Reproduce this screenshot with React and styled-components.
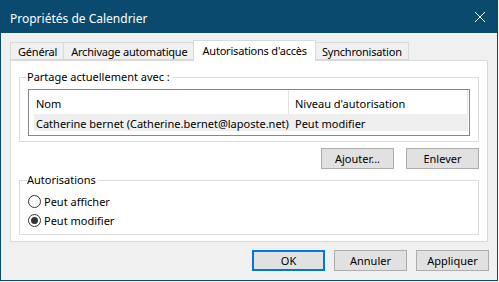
import React, { useState } from "react";
import styled, { createGlobalStyle } from "styled-components";

const Global = createGlobalStyle`
  html, body { margin: 0; padding: 0; background: #ffffff; }
  body { font-family: "Noto Sans", "Open Sans", sans-serif; font-size: 11px; color: #000; }
  * { box-sizing: border-box; }
`;

const Window = styled.div`
  width: 498px;
  height: 281px;
  border: 1px solid #0a4a6e;
  border-top: none;
  background: #f0f0f0;
  display: flex;
  flex-direction: column;
`;

const TitleBar = styled.div`
  height: 33px;
  background: #0a4a6e;
  color: #fff;
  display: flex;
  align-items: center;
  justify-content: space-between;
  padding: 3px 10px 0 10px;
  font-size: 12px;
  margin: 0 -1px;
`;

const CloseBtn = styled.div`
  width: 14px;
  height: 14px;
  margin-right: 1px;
  margin-top: -3px;
  display: flex;
`;

const Body = styled.div`
  flex: 1;
  display: flex;
  flex-direction: column;
  padding: 7px 9px 0 9px;
`;

const TabRow = styled.div`
  display: flex;
  align-items: flex-end;
  height: 20px;
  position: relative;
  z-index: 1;
`;

const Tab = styled.div`
  height: ${(p) => (p.$active ? "21px" : "18px")};
  padding: ${(p) => (p.$active ? "0 8px 2px 8px" : "1px 6px 0 7px")};
  margin: 0 ${(p) => (p.$active ? "-1px" : "0")} ${(p) => (p.$active ? "-1px" : "0")};
  border: 1px solid #d9d9d9;
  border-bottom: ${(p) => (p.$active ? "none" : "1px solid #d9d9d9")};
  border-left: ${(p) => (p.$first || p.$active ? "1px solid #d9d9d9" : "none")};
  background: ${(p) => (p.$active ? "#ffffff" : "#f0f0f0")};
  display: flex;
  align-items: center;
  white-space: nowrap;
  letter-spacing: -0.2px;
  position: relative;
  z-index: ${(p) => (p.$active ? 2 : 1)};
`;

const Panel = styled.div`
  height: 182px;
  background: #fff;
  border: 1px solid #d9d9d9;
  padding: 8px 8px 0 8px;
  display: flex;
  flex-direction: column;
`;

const Group = styled.fieldset`
  margin: 0;
  border: 1px solid #dcdcdc;
  padding: ${(p) => p.$pad};
  min-width: 0;
`;

const Legend = styled.legend`
  padding: 0 2px 0 0;
  margin-left: -1px;
  line-height: 16px;
`;

const ListBox = styled.div`
  border: 1px solid #828790;
  height: 47px;
  padding: 0 1px 0 5px;
`;

const ListRow = styled.div`
  display: grid;
  grid-template-columns: 255px 179px;
  height: ${(p) => p.$h}px;
  align-items: center;
  background: ${(p) => (p.$selected ? "#efefef" : "transparent")};
`;

const HeaderCell = styled.div`
  height: 100%;
  display: flex;
  align-items: center;
  padding-left: ${(p) => (p.$sub ? "6px" : "2px")};
  border-right: 1px solid #e5e5e5;
  padding-top: 3px;
`;

const Cell = styled.div`
  padding-left: ${(p) => (p.$sub ? "6px" : "2px")};
  padding-top: 1px;
  white-space: nowrap;
  overflow: hidden;
`;

const ButtonRow = styled.div`
  display: flex;
  justify-content: flex-end;
  gap: 12px;
  margin: ${(p) => p.$margin};
`;

const Button = styled.button`
  width: 73px;
  height: 21px;
  background: #e1e1e1;
  border: ${(p) => (p.$default ? "2px solid #0078d7" : "1px solid #adadad")};
  font-family: inherit;
  font-size: 11px;
  color: #000;
  padding: 0;
  display: flex;
  align-items: center;
  justify-content: center;
`;

const RadioLabel = styled.label`
  display: flex;
  align-items: center;
  gap: 3px;
  height: 19px;
`;

const RadioCircle = styled.span`
  width: 13px;
  height: 13px;
  border-radius: 50%;
  border: 1px solid #333;
  background: #fff;
  display: flex;
  align-items: center;
  justify-content: center;
  &::after {
    content: "";
    width: 7px;
    height: 7px;
    border-radius: 50%;
    background: ${(p) => (p.$checked ? "#333" : "transparent")};
  }
`;

const Footer = styled.div`
  display: flex;
  justify-content: flex-end;
  gap: 9px;
  padding: 8px 0 0 0;
  margin-right: -1px;
`;

function Radio({ checked, children, onSelect }) {
  return (
    <RadioLabel onClick={onSelect}>
      <RadioCircle $checked={checked} />
      {children}
    </RadioLabel>
  );
}

export default function App() {
  const [perm, setPerm] = useState("modifier");
  const tabs = ["Général", "Archivage automatique", "Autorisations d'accès", "Synchronisation"];
  return (
    <>
      <Global />
      <Window>
        <TitleBar>
          <span>Propriétés de Calendrier</span>
          <CloseBtn>
            <svg width="14" height="14" viewBox="0 0 14 14">
              <path d="M2 2 L12 12 M12 2 L2 12" stroke="#fff" strokeWidth="1" fill="none" />
            </svg>
          </CloseBtn>
        </TitleBar>
        <Body>
          <TabRow>
            {tabs.map((t, i) => (
              <Tab key={t} $first={i === 0} $active={i === 2}>
                {t}
              </Tab>
            ))}
          </TabRow>
          <Panel>
            <Group $pad="4px 8px 5px 8px">
              <Legend>Partage actuellement avec :</Legend>
              <ListBox>
                <ListRow $h={24}>
                  <HeaderCell>Nom</HeaderCell>
                  <HeaderCell $sub>Niveau d'autorisation</HeaderCell>
                </ListRow>
                <ListRow $h={17} $selected>
                  <Cell>Catherine bernet (Catherine.bernet@laposte.net)</Cell>
                  <Cell $sub>Peut modifier</Cell>
                </ListRow>
              </ListBox>
            </Group>
            <ButtonRow $margin="6px 0 3px 0">
              <Button>Ajouter...</Button>
              <Button>Enlever</Button>
            </ButtonRow>
            <Group $pad="4px 8px 4px 8px">
              <Legend>Autorisations</Legend>
              <Radio checked={perm === "afficher"} onSelect={() => setPerm("afficher")}>
                Peut afficher
              </Radio>
              <Radio checked={perm === "modifier"} onSelect={() => setPerm("modifier")}>
                Peut modifier
              </Radio>
            </Group>
          </Panel>
          <Footer>
            <Button $default>OK</Button>
            <Button>Annuler</Button>
            <Button>Appliquer</Button>
          </Footer>
        </Body>
      </Window>
    </>
  );
}
